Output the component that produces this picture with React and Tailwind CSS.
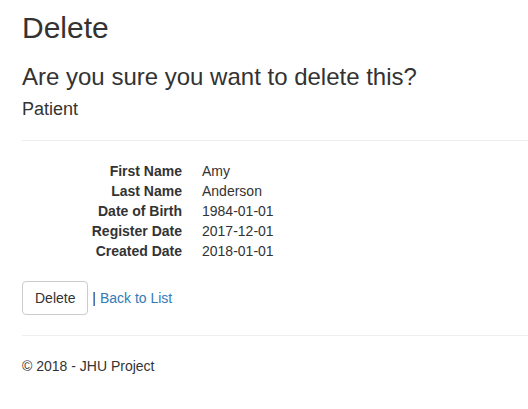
export default function App() {
  const rows = [
    ["First Name", "Amy"],
    ["Last Name", "Anderson"],
    ["Date of Birth", "1984-01-01"],
    ["Register Date", "2017-12-01"],
    ["Created Date", "2018-01-01"],
  ];
  return (
    <div className="min-h-[409px] bg-white pl-[22px] pt-[10.6px] text-[14px] leading-[20px] text-[#333] font-['Liberation_Sans',Arial,sans-serif]">
      <h2 className="text-[30px] leading-[33px] font-normal">Delete</h2>
      <h3 className="mt-[20px] text-[24px] leading-[26.4px] font-normal">Are you sure you want to delete this?</h3>
      <div>
        <h4 className="mt-[10px] text-[18px] leading-[19.8px] font-normal">Patient</h4>
        <hr className="mt-[20px] border-0 border-t border-[#eee]" />
        <dl className="mt-[20px]">
          {rows.map(([k, v]) => (
            <div key={k} className="flex">
              <dt className="w-[160px] shrink-0 text-right font-bold">{k}</dt>
              <dd className="ml-[20px]">{v}</dd>
            </div>
          ))}
        </dl>
        <form className="mt-[20px]" onSubmit={(e) => e.preventDefault()}>
          <button type="submit" className="inline-block align-baseline bg-white border border-[#ccc] rounded-[4px] px-[12px] py-[6px] text-[14px] leading-[20px] text-[#333]">Delete</button>
          {" | "}
          <a href="#" className="text-[#337ab7]">Back to List</a>
        </form>
      </div>
      <hr className="mt-[20px] border-0 border-t border-[#eee]" />
      <footer>
        <p className="mt-[20px]">© 2018 - JHU Project</p>
      </footer>
    </div>
  );
}
